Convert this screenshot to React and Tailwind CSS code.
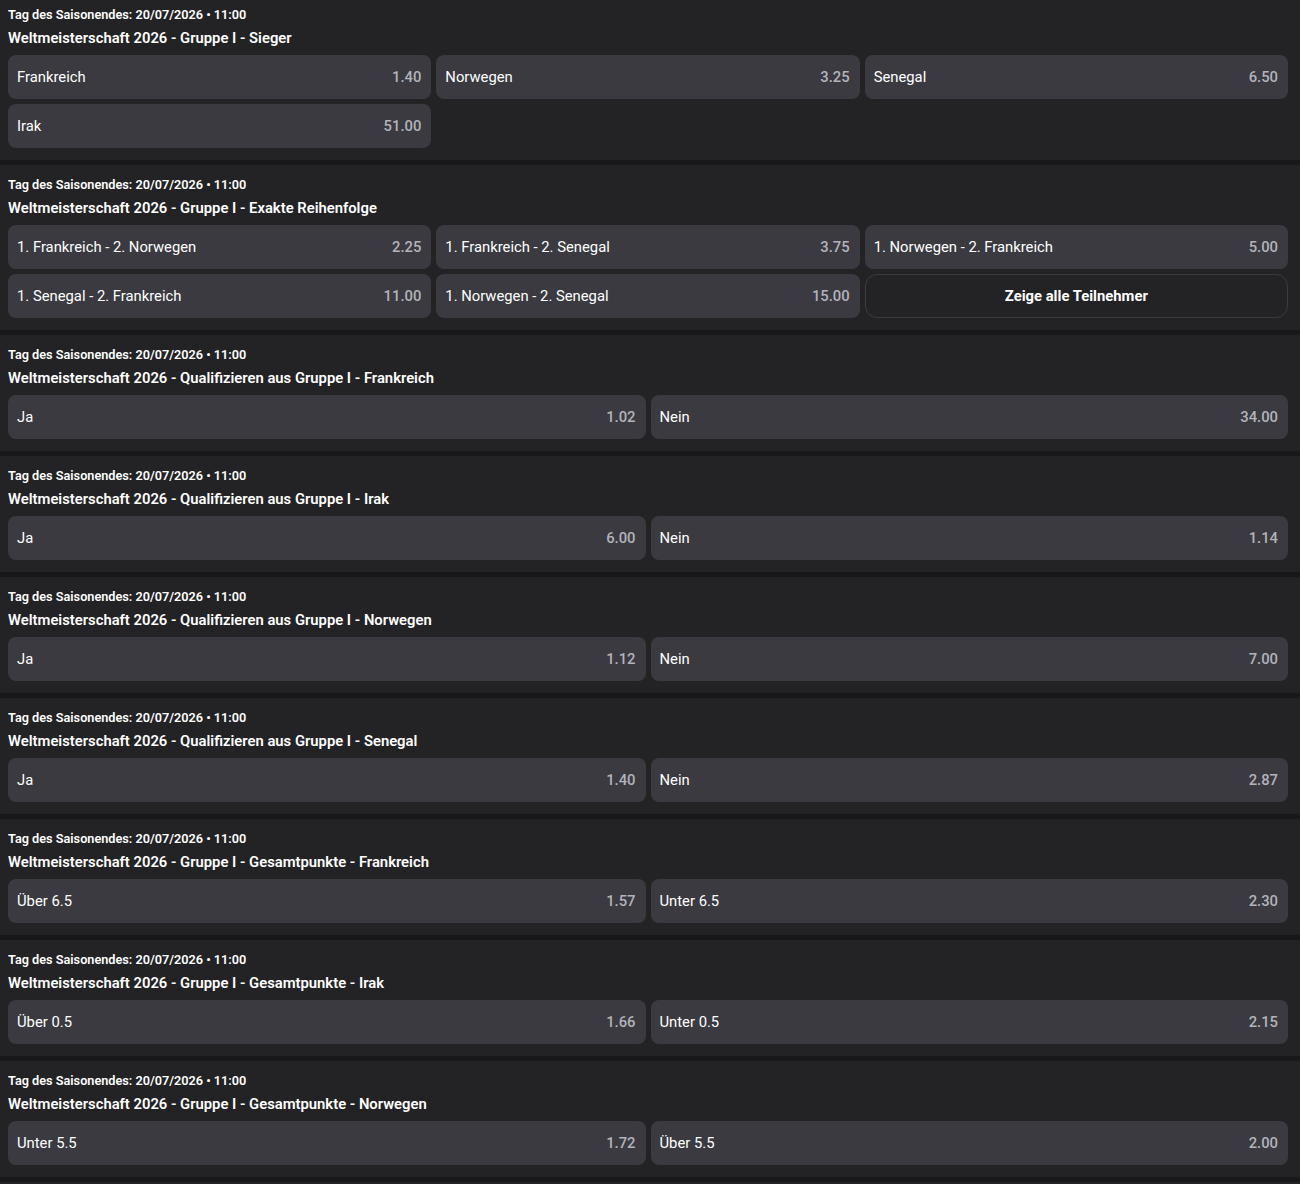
const markets = [
  {
    title: 'Weltmeisterschaft 2026 - Gruppe I - Sieger',
    cols: 3,
    odds: [
      ['Frankreich', '1.40'],
      ['Norwegen', '3.25'],
      ['Senegal', '6.50'],
      ['Irak', '51.00'],
    ],
  },
  {
    title: 'Weltmeisterschaft 2026 - Gruppe I - Exakte Reihenfolge',
    cols: 3,
    showAll: true,
    odds: [
      ['1. Frankreich - 2. Norwegen', '2.25'],
      ['1. Frankreich - 2. Senegal', '3.75'],
      ['1. Norwegen - 2. Frankreich', '5.00'],
      ['1. Senegal - 2. Frankreich', '11.00'],
      ['1. Norwegen - 2. Senegal', '15.00'],
    ],
  },
  {
    title: 'Weltmeisterschaft 2026 - Qualifizieren aus Gruppe I - Frankreich',
    cols: 2,
    odds: [['Ja', '1.02'], ['Nein', '34.00']],
  },
  {
    title: 'Weltmeisterschaft 2026 - Qualifizieren aus Gruppe I - Irak',
    cols: 2,
    odds: [['Ja', '6.00'], ['Nein', '1.14']],
  },
  {
    title: 'Weltmeisterschaft 2026 - Qualifizieren aus Gruppe I - Norwegen',
    cols: 2,
    odds: [['Ja', '1.12'], ['Nein', '7.00']],
  },
  {
    title: 'Weltmeisterschaft 2026 - Qualifizieren aus Gruppe I - Senegal',
    cols: 2,
    odds: [['Ja', '1.40'], ['Nein', '2.87']],
  },
  {
    title: 'Weltmeisterschaft 2026 - Gruppe I - Gesamtpunkte - Frankreich',
    cols: 2,
    odds: [['Über 6.5', '1.57'], ['Unter 6.5', '2.30']],
  },
  {
    title: 'Weltmeisterschaft 2026 - Gruppe I - Gesamtpunkte - Irak',
    cols: 2,
    odds: [['Über 0.5', '1.66'], ['Unter 0.5', '2.15']],
  },
  {
    title: 'Weltmeisterschaft 2026 - Gruppe I - Gesamtpunkte - Norwegen',
    cols: 2,
    odds: [['Unter 5.5', '1.72'], ['Über 5.5', '2.00']],
  },
];

function OddButton({ label, price }) {
  return (
    <button className="h-[44px] rounded-lg bg-[#3a3a40] pl-[9px] pr-[10px] flex items-center justify-between text-[14.8px]">
      <span className="text-white">{label}</span>
      <span className="text-[#b3b3bb] font-medium">{price}</span>
    </button>
  );
}

function Market({ market, first }) {
  return (
    <div className={`bg-[#232326] pl-2 pr-3 pt-[11px] pb-3 ${first ? '-mt-[5px]' : ''}`}>
      <div className="text-[12.7px] leading-[17px] font-semibold text-white">
        Tag des Saisonendes: 20/07/2026 • 11:00
      </div>
      <div className="mt-[5px] text-[14.8px] leading-[21px] font-semibold text-white">{market.title}</div>
      <div
        className={`mt-[6px] grid gap-[5px] ${market.cols === 3 ? 'grid-cols-3' : 'grid-cols-2'}`}
      >
        {market.odds.map(([label, price]) => (
          <OddButton key={label} label={label} price={price} />
        ))}
        {market.showAll && (
          <button className="h-[44px] rounded-xl border border-[#3a3a40] text-[14.8px] font-bold text-white">
            Zeige alle Teilnehmer
          </button>
        )}
      </div>
    </div>
  );
}

export default function App() {
  return (
    <div
      className="h-screen bg-[#18181a] overflow-hidden"
      style={{ fontFamily: 'Roboto, "Liberation Sans", sans-serif' }}
    >
      <div className="flex flex-col gap-[5px]">
        {markets.map((m, i) => (
          <Market key={m.title} market={m} first={i === 0} />
        ))}
        {/* next market, only its top edge is in view */}
        <div className="h-[40px] bg-[#232326]" />
      </div>
    </div>
  );
}
